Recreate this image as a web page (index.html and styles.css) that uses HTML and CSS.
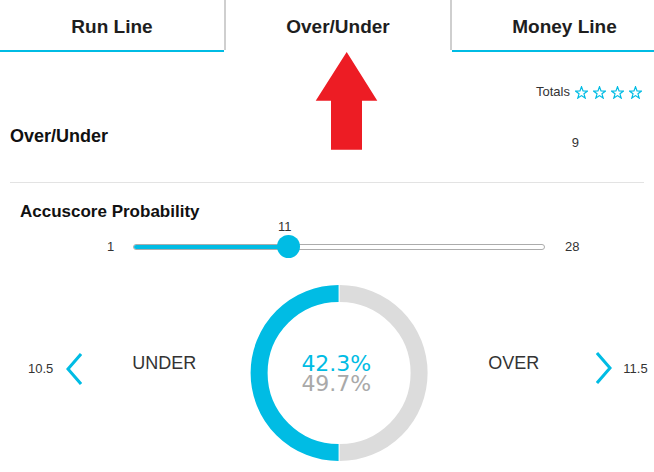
FILE: index.html
```html
<!DOCTYPE html>
<html>
<head>
<meta charset="utf-8">
<link rel="stylesheet" href="styles.css">
</head>
<body>
<div class="page">
  <nav class="tabs">
    <div class="tab">Run Line</div>
    <div class="tab active">Over/Under</div>
    <div class="tab">Money Line</div>
  </nav>

  <svg class="arrow" width="63" height="98" viewBox="0 0 63 98">
    <polygon points="31.7,0 62.3,48.7 47,48.7 47,97.7 16,97.7 16,48.7 0.7,48.7" fill="#ed1c24"/>
  </svg>

  <div class="totals">
    <span class="totals-label">Totals</span>
    <span class="stars">
      <svg class="star" width="13" height="13" viewBox="0 0 13 13"><polygon points="6.5,0.7 8.03,4.9 12.49,5.05 8.97,7.8 10.2,12.1 6.5,9.6 2.8,12.1 4.03,7.8 0.51,5.05 4.97,4.9"/></svg>
      <svg class="star" width="13" height="13" viewBox="0 0 13 13"><polygon points="6.5,0.7 8.03,4.9 12.49,5.05 8.97,7.8 10.2,12.1 6.5,9.6 2.8,12.1 4.03,7.8 0.51,5.05 4.97,4.9"/></svg>
      <svg class="star" width="13" height="13" viewBox="0 0 13 13"><polygon points="6.5,0.7 8.03,4.9 12.49,5.05 8.97,7.8 10.2,12.1 6.5,9.6 2.8,12.1 4.03,7.8 0.51,5.05 4.97,4.9"/></svg>
      <svg class="star" width="13" height="13" viewBox="0 0 13 13"><polygon points="6.5,0.7 8.03,4.9 12.49,5.05 8.97,7.8 10.2,12.1 6.5,9.6 2.8,12.1 4.03,7.8 0.51,5.05 4.97,4.9"/></svg>
    </span>
  </div>

  <div class="ou-row">
    <h2 class="ou-label">Over/Under</h2>
    <span class="ou-value">9</span>
  </div>

  <hr class="divider">

  <h3 class="prob-title">Accuscore Probability</h3>

  <div class="slider-value">11</div>
  <div class="slider-row">
    <span class="slider-min">1</span>
    <div class="slider">
      <div class="track">
        <div class="fill" style="width:37.7%"><span class="thumb"></span></div>
      </div>
    </div>
    <span class="slider-max">28</span>
  </div>

  <div class="result-row">
    <span class="line-num line-left">10.5</span>
    <svg class="chev chev-left" width="16" height="32" viewBox="0 0 16 32"><polyline points="15,1 2,16 15,31"/></svg>
    <span class="side side-under">UNDER</span>
    <div class="donut">
      <svg class="ring" width="178" height="178" viewBox="0 0 178 178">
        <path d="M 89.6 9.5 A 79.5 79.5 0 0 1 89.6 168.5" class="ring-grey"/>
        <path d="M 88.6 9.5 A 79.5 79.5 0 0 0 88.6 168.5" class="ring-blue"/>
      </svg>
      <div class="pct">
        <div class="pct-blue">42.3%</div>
        <div class="pct-grey">49.7%</div>
      </div>
    </div>
    <span class="side side-over">OVER</span>
    <svg class="chev chev-right" width="16" height="32" viewBox="0 0 16 32"><polyline points="1,1 14,16 1,31"/></svg>
    <span class="line-num line-right">11.5</span>
  </div>
</div>
</body>
</html>
```

FILE: styles.css
```css
html, body {
  margin: 0;
  padding: 0;
  overflow: hidden;
  background: #fff;
}

body {
  font-family: "Liberation Sans", Arial, sans-serif;
  color: #333;
}

.page {
  position: relative;
  width: 654px;
  height: 472px;
  overflow: hidden;
}

/* Tabs */
.tabs {
  display: flex;
  align-items: flex-start;
  width: 680px;
  height: 52px;
}

.tab {
  flex: none;
  width: 224px;
  height: 50px;
  line-height: 53px;
  text-align: center;
  font-size: 19px;
  font-weight: bold;
  color: #1e1e1e;
  border-bottom: 2px solid #00bce4;
}

.tab.active {
  width: 224px;
  border-bottom: none;
  border-left: 2px solid #cfcfcf;
  border-right: 2px solid #cfcfcf;
}

.tab:last-child {
  width: 225px;
}

/* Annotation arrow */
.arrow {
  position: absolute;
  left: 315px;
  top: 52px;
}

/* Totals */
.totals {
  display: flex;
  justify-content: flex-end;
  align-items: center;
  margin-top: 32px;
  padding-right: 12px;
  height: 15px;
  font-size: 13px;
  line-height: 15px;
  color: #333;
}

.stars {
  display: flex;
  gap: 5px;
  margin-left: 5px;
  margin-top: 1px;
}

.star polygon {
  fill: none;
  stroke: #00bce4;
  stroke-width: 1.2;
  stroke-linejoin: miter;
}

/* Over/Under row */
.ou-row {
  display: flex;
  justify-content: space-between;
  align-items: flex-start;
  margin-top: 27px;
  padding-left: 10px;
  padding-right: 75px;
}

.ou-label {
  margin: 0;
  font-size: 18px;
  line-height: 20px;
  font-weight: bold;
  color: #111;
}

.ou-value {
  margin-top: 9px;
  font-size: 13px;
  line-height: 15px;
  color: #333;
}

.divider {
  margin: 32px 10px 0 10px;
  border: none;
  border-top: 1px solid #e3e3e3;
  height: 0;
}

.prob-title {
  margin: 20px 0 0 20px;
  font-size: 17px;
  line-height: 17px;
  font-weight: bold;
  color: #111;
}

/* Slider */
.slider-value {
  margin: 1px 0 0 278px;
  font-size: 13px;
  line-height: 12px;
  color: #333;
}

.slider-row {
  display: flex;
  align-items: center;
  margin-top: 2px;
  height: 23px;
  font-size: 13px;
  line-height: 15px;
  color: #333;
}

.slider-min {
  margin-left: 107px;
  width: 8px;
}

.slider {
  margin-left: 18px;
  width: 412px;
  height: 23px;
  display: flex;
  align-items: center;
}

.track {
  position: relative;
  flex: 1;
  height: 4px;
  border: 1px solid #acacac;
  border-radius: 3px;
  background: #fff;
}

.fill {
  position: relative;
  height: 100%;
  background: #00bce4;
  border-radius: 2px;
}

.thumb {
  position: absolute;
  right: -11.5px;
  top: -9.5px;
  width: 23px;
  height: 23px;
  border-radius: 50%;
  background: #00bce4;
}

.slider-max {
  margin-left: 20px;
}

/* Result row */
.result-row {
  display: flex;
  align-items: center;
  margin-top: 26px;
  height: 178px;
  color: #333;
}

.line-num {
  font-size: 13px;
  line-height: 15px;
  margin-bottom: 10px;
}

.line-left {
  margin-left: 28px;
}

.chev polyline {
  fill: none;
  stroke: #00bce4;
  stroke-width: 3;
  stroke-linecap: butt;
  stroke-linejoin: miter;
}

.chev-left {
  margin-left: 13px;
  margin-bottom: 8px;
}

.side {
  font-size: 18px;
  line-height: 18px;
  margin-bottom: 21px;
}

.side-under {
  margin-left: 50px;
}

.donut {
  display: grid;
  margin-left: 54px;
  width: 178px;
  height: 178px;
}

.ring, .pct {
  grid-area: 1 / 1;
}

.ring path {
  fill: none;
  stroke-width: 17;
}

.ring-blue {
  stroke: #00bce4;
}

.ring-grey {
  stroke: #dcdcdc;
}

.pct {
  align-self: center;
  justify-self: center;
  margin-right: 6px;
  margin-top: 2px;
  font-family: "DejaVu Sans", Verdana, sans-serif;
  font-size: 22px;
  line-height: 20px;
  text-align: left;
}

.pct-blue {
  color: #00bce4;
}

.pct-grey {
  color: #a9a9a9;
}

.side-over {
  margin-left: 60px;
}

.chev-right {
  margin-left: 57px;
  margin-bottom: 11px;
}

.line-right {
  margin-left: 11px;
}
```
